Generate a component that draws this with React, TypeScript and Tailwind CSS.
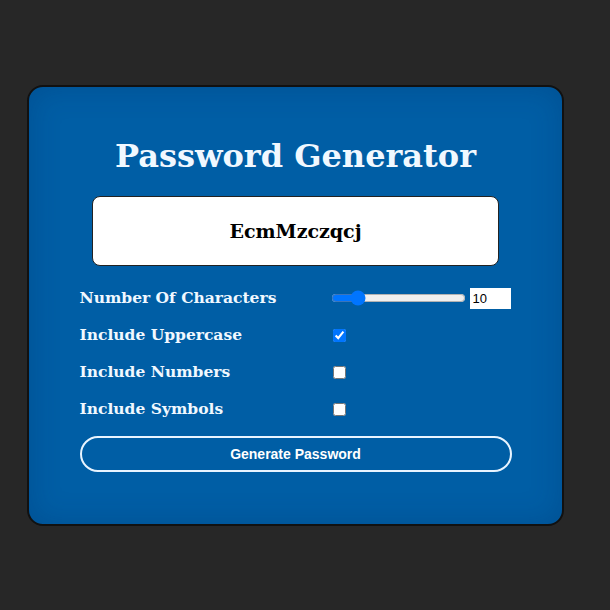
import React, { useState } from "react";

const LOWER = "abcdefghijklmnopqrstuvwxyz";
const UPPER = "ABCDEFGHIJKLMNOPQRSTUVWXYZ";
const DIGITS = "0123456789";
const SYMBOLS = "!@#$%^&*()_+-=[]{}";

const serif = { fontFamily: '"DejaVu Serif", Georgia, serif' };

const App = () => {
  const [length, setLength] = useState(10);
  const [upper, setUpper] = useState(true);
  const [numbers, setNumbers] = useState(false);
  const [symbols, setSymbols] = useState(false);
  const [password, setPassword] = useState("EcmMzczqcj");

  const generate = () => {
    let pool = LOWER;
    if (upper) pool += UPPER;
    if (numbers) pool += DIGITS;
    if (symbols) pool += SYMBOLS;
    let out = "";
    for (let i = 0; i < length; i++) {
      out += pool[Math.floor(Math.random() * pool.length)];
    }
    setPassword(out);
  };

  return (
    <div className="min-h-screen w-full bg-[#272727] pt-[85px] pl-[27px]">
      <div className="w-[537px] h-[441px] rounded-[16px] border-2 border-[#111] bg-[#005ea5] shadow-[inset_0_0_30px_rgba(0,40,90,0.25)] flex flex-col items-center pt-[53px]">
        <h1
          className="text-[32px] font-bold text-[#f0f8ff] leading-none"
          style={serif}
        >
          Password Generator
        </h1>
        <div className="mt-[24px] w-[407px] h-[70px] rounded-[8px] border border-[#222] bg-white flex items-center justify-center">
          <span className="text-[19px] font-bold text-black" style={serif}>
            {password}
          </span>
        </div>

        <div className="mt-[22px] w-[432px] flex flex-col gap-[17px]" style={serif}>
          <div className="flex items-center h-[20px]">
            <span className="w-[251px] text-[15.5px] font-bold text-[#f0f8ff]">
              Number Of Characters
            </span>
            <input
              type="range"
              min={4}
              max={40}
              value={length}
              onChange={(e) => setLength(Number(e.target.value))}
              className="w-[135px] m-0"
            />
            <input
              type="number"
              value={length}
              onChange={(e) => setLength(Number(e.target.value))}
              className="ml-[4px] w-[41px] h-[21px] bg-white text-black text-[13px] px-[3px] outline-none"
              style={{ fontFamily: '"Liberation Sans", Arial, sans-serif' }}
            />
          </div>
          <div className="flex items-center h-[20px]">
            <span className="w-[253px] text-[15.5px] font-bold text-[#f0f8ff]">
              Include Uppercase
            </span>
            <input
              type="checkbox"
              checked={upper}
              onChange={(e) => setUpper(e.target.checked)}
              className="m-0 w-[13px] h-[13px]"
            />
          </div>
          <div className="flex items-center h-[20px]">
            <span className="w-[253px] text-[15.5px] font-bold text-[#f0f8ff]">
              Include Numbers
            </span>
            <input
              type="checkbox"
              checked={numbers}
              onChange={(e) => setNumbers(e.target.checked)}
              className="m-0 w-[13px] h-[13px]"
            />
          </div>
          <div className="flex items-center h-[20px]">
            <span className="w-[253px] text-[15.5px] font-bold text-[#f0f8ff]">
              Include Symbols
            </span>
            <input
              type="checkbox"
              checked={symbols}
              onChange={(e) => setSymbols(e.target.checked)}
              className="m-0 w-[13px] h-[13px]"
            />
          </div>
        </div>

        <button
          onClick={generate}
          className="mt-[17px] w-[432px] h-[36px] rounded-full border-2 border-[#e8f4ff] text-[14px] font-bold text-white"
          style={{ fontFamily: '"Liberation Sans", Arial, sans-serif' }}
        >
          Generate Password
        </button>
      </div>
    </div>
  );
};

export default App;
